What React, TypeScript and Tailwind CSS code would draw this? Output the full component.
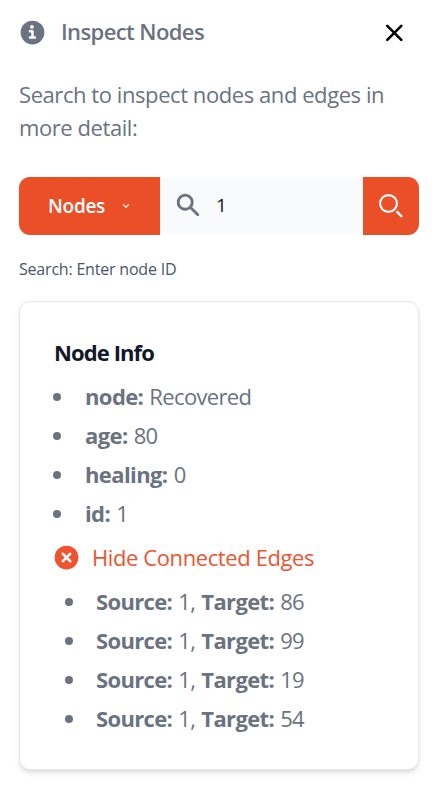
import React from "react";

const nodeInfo = [
  { label: "node:", value: "Recovered" },
  { label: "age:", value: "80" },
  { label: "healing:", value: "0" },
  { label: "id:", value: "1" },
];
const targets = ["86", "99", "19", "54"];

export default function App() {
  return (
    <main className="h-[786px] w-[440px] overflow-hidden bg-white px-[19px] pt-3 font-['Open_Sans','Noto_Sans',sans-serif] text-[#6b7280]">
      <header className="flex h-10 items-center">
        <svg className="ml-[1px] h-[25px] w-[25px] shrink-0" viewBox="0 0 20 20" fill="currentColor">
          <path d="M10 .5a9.5 9.5 0 1 0 9.5 9.5A9.51 9.51 0 0 0 10 .5ZM9.5 4a1.5 1.5 0 1 1 0 3 1.5 1.5 0 0 1 0-3ZM12 15H8a1 1 0 0 1 0-2h1v-3H8a1 1 0 0 1 0-2h2a1 1 0 0 1 1 1v4h1a1 1 0 0 1 0 2Z" />
        </svg>
        <h5 className="ml-[16px] pb-[1px] text-[22px] font-semibold tracking-[-0.6px]">Inspect Nodes</h5>
        <button className="mr-[17px] ml-auto pt-[2px] text-black" aria-label="Close">
          <svg className="h-[18px] w-[18px]" viewBox="0 0 18 18" fill="none" stroke="currentColor" strokeWidth="2.6" strokeLinecap="round">
            <path d="m1.3 1.8 14 14M15.3 1.8l-14 14" />
          </svg>
        </button>
      </header>

      <p className="mt-[26px] text-[22px] leading-[33px] font-normal whitespace-nowrap tracking-[-0.43px]">
        Search to inspect nodes and edges in<br />more detail:
      </p>

      <form className="mt-[33px] flex h-[58px] w-[400px]">
        <button type="button" className="flex w-[141px] items-center rounded-l-[11px] bg-[#eb4f27] pl-[29px] text-[19px] font-semibold text-white">
          <span className="w-[57px] whitespace-nowrap tracking-[-0.3px]">Nodes</span>
          <svg className="ml-[17px] h-[6px] w-[8px]" viewBox="0 0 8 6" fill="none" stroke="currentColor" strokeWidth="1.3">
            <path d="m1.2 1.5 2.8 2.7 2.8-2.7" />
          </svg>
        </button>
        <div className="flex h-14 w-[203px] items-center bg-[#f9fafb]">
          <svg className="ml-[14px] h-7 w-7" viewBox="0 0 20 20" fill="currentColor">
            <path fillRule="evenodd" clipRule="evenodd" d="M8 4a4 4 0 100 8 4 4 0 000-8zM2 8a6 6 0 1110.89 3.476l4.817 4.817a1 1 0 01-1.414 1.414l-4.816-4.816A6 6 0 012 8z" />
          </svg>
          <span className="ml-[14px] text-[19px] text-[#111827]">1</span>
        </div>
        <button type="button" aria-label="Search" className="flex w-14 items-center justify-center rounded-r-[11px] bg-[#eb4f27] text-white">
          <svg className="h-[26px] w-[26px]" viewBox="0 0 26 26" fill="none" stroke="currentColor" strokeWidth="2.1">
            <circle cx="10.5" cy="10.5" r="8.4" />
            <path d="m18.6 18.3 5.4 5.5" strokeWidth="2.4" />
          </svg>
        </button>
      </form>

      <p className="mt-[22px] text-[16px] leading-6 font-normal tracking-[-0.2px] text-[#4b5563]">Search: Enter node ID</p>

      <section className="mt-5 h-[469px] w-[400px] rounded-[11px] border border-[#e5e7eb] bg-white pt-[31px] pl-[34px] shadow-md">
        <h5 className="text-[22px] leading-[39px] font-bold tracking-[-0.9px] text-[#111827]">Node Info</h5>
        <ul className="mt-[5px] text-[22px] leading-[39px]">
          {nodeInfo.map((item) => (
            <li key={item.label} className="flex h-[39px] items-center">
              <span className="mr-[24px] -ml-[1px] h-2 w-2 rounded-full bg-current" />
              <span className="tracking-[-0.65px] [word-spacing:1px]"><strong className="font-bold tracking-[-0.6px]">{item.label}</strong> {item.value}</span>
            </li>
          ))}
        </ul>
        <button type="button" className="mt-[5px] flex h-[39px] items-center text-[22px] tracking-[-0.4px] text-[#f05330]">
          <svg className="h-[25px] w-[25px]" viewBox="0 0 20 20" fill="currentColor">
            <path d="M10 .5a9.5 9.5 0 1 0 9.5 9.5A9.51 9.51 0 0 0 10 .5Zm3.707 11.793a1 1 0 1 1-1.414 1.414L10 11.414l-2.293 2.293a1 1 0 0 1-1.414-1.414L8.586 10 6.293 7.707a1 1 0 0 1 1.414-1.414L10 8.586l2.293-2.293a1 1 0 0 1 1.414 1.414L11.414 10l2.293 2.293Z" />
          </svg>
          <span className="ml-[13px]">Hide Connected Edges</span>
        </button>
        <ul className="mt-[5px] pl-[11px] text-[22px] leading-[39px]">
          {targets.map((target) => (
            <li key={target} className="flex h-[39px] items-center">
              <span className="mr-[23px] h-2 w-2 rounded-full bg-current" />
              <span className="tracking-[-0.65px] [word-spacing:1px]"><strong className="font-bold tracking-[-0.65px]">Source:</strong> 1, <strong className="font-bold tracking-[-0.65px]">Target:</strong> {target}</span>
            </li>
          ))}
        </ul>
      </section>
    </main>
  );
}
